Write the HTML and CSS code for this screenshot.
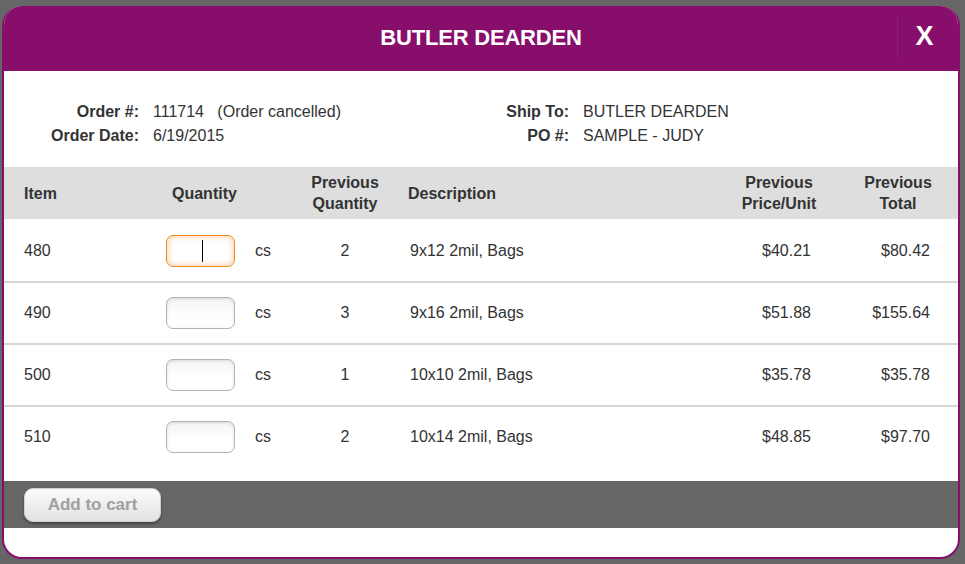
FILE: index.html
```html
<!DOCTYPE html>
<html lang="en">
<head>
    <meta charset="UTF-8">
    <meta name="viewport" content="width=device-width, initial-scale=1.0">
    <title>Reorder - BUTLER DEARDEN</title>
    <link rel="stylesheet" href="styles.css">
</head>
<body>
    <div class="modal">
        <div class="modal-header">
            <h1>BUTLER DEARDEN</h1>
            <button type="button" class="close-btn">X</button>
        </div>

        <div class="order-info">
            <div class="info-group">
                <span class="label">Order #:</span>
                <span class="value">111714&nbsp;&nbsp;&nbsp;(Order cancelled)</span>
                <span class="label">Order Date:</span>
                <span class="value">6/19/2015</span>
            </div>
            <div class="info-group">
                <span class="label">Ship To:</span>
                <span class="value">BUTLER DEARDEN</span>
                <span class="label">PO #:</span>
                <span class="value">SAMPLE - JUDY</span>
            </div>
        </div>

        <div class="table-wrap">
            <table class="order-table">
                <colgroup>
                    <col class="c-item">
                    <col class="c-qty">
                    <col class="c-prevqty">
                    <col class="c-desc">
                    <col class="c-price">
                    <col class="c-total">
                </colgroup>
                <thead>
                    <tr>
                        <th class="left">Item</th>
                        <th class="qty-head">Quantity</th>
                        <th>Previous<br>Quantity</th>
                        <th class="left desc">Description</th>
                        <th>Previous<br>Price/Unit</th>
                        <th>Previous<br>Total</th>
                    </tr>
                </thead>
                <tbody>
                    <tr>
                        <td>480</td>
                        <td><div class="qty-cell"><span class="qty-box"><input type="text" class="qty-input focused"><span class="caret"></span></span>cs</div></td>
                        <td class="center">2</td>
                        <td class="desc">9x12 2mil, Bags</td>
                        <td class="money price">$40.21</td>
                        <td class="money total">$80.42</td>
                    </tr>
                    <tr>
                        <td>490</td>
                        <td><div class="qty-cell"><span class="qty-box"><input type="text" class="qty-input"></span>cs</div></td>
                        <td class="center">3</td>
                        <td class="desc">9x16 2mil, Bags</td>
                        <td class="money price">$51.88</td>
                        <td class="money total">$155.64</td>
                    </tr>
                    <tr>
                        <td>500</td>
                        <td><div class="qty-cell"><span class="qty-box"><input type="text" class="qty-input"></span>cs</div></td>
                        <td class="center">1</td>
                        <td class="desc">10x10 2mil, Bags</td>
                        <td class="money price">$35.78</td>
                        <td class="money total">$35.78</td>
                    </tr>
                    <tr>
                        <td>510</td>
                        <td><div class="qty-cell"><span class="qty-box"><input type="text" class="qty-input"></span>cs</div></td>
                        <td class="center">2</td>
                        <td class="desc">10x14 2mil, Bags</td>
                        <td class="money price">$48.85</td>
                        <td class="money total">$97.70</td>
                    </tr>
                </tbody>
            </table>
        </div>

        <div class="modal-footer">
            <button type="button" class="cart-btn">Add to cart</button>
        </div>
    </div>
</body>
</html>
```

FILE: styles.css
```css
body {
    font-family: "Liberation Sans", Arial, sans-serif;
    margin: 0;
    padding: 6px 0 0 2px;
    background-color: #666;
    color: #333;
}

.modal {
    width: 958px;
    box-sizing: border-box;
    background-color: #fff;
    border: 2px solid #870e6b;
    border-top: none;
    border-radius: 20px;
    overflow: hidden;
}

.modal-header {
    height: 65px;
    margin: 0 -2px;
    background-color: #870e6b;
    display: flex;
    align-items: center;
    justify-content: center;
    position: relative;
}

.modal-header h1 {
    margin: 0 0 1px 0;
    color: #fff;
    font-size: 22px;
    font-weight: bold;
    letter-spacing: -0.2px;
}

.close-btn {
    position: absolute;
    right: 0;
    top: 10px;
    width: 63px;
    height: 42px;
    padding: 0 9px 2px 0;
    background: none;
    border: none;
    border-left: 1px solid rgba(255, 255, 255, 0.08);
    color: #fff;
    font-family: "Liberation Sans", Arial, sans-serif;
    font-size: 27px;
    font-weight: bold;
    cursor: pointer;
}

/* order details */
.order-info {
    display: flex;
    padding: 29px 0 19px 0;
}

.info-group {
    display: grid;
    grid-template-columns: 135px auto;
    column-gap: 14px;
    width: 430px;
    font-size: 16px;
    line-height: 24px;
}

.info-group .label {
    font-weight: bold;
    text-align: right;
}

/* items table */
.table-wrap {
    padding-bottom: 14px;
}

.order-table {
    width: 100%;
    table-layout: fixed;
    border-collapse: collapse;
    font-size: 16px;
}

.c-item { width: 136px; }
.c-qty { width: 150px; }
.c-prevqty { width: 110px; }
.c-desc { width: 320px; }
.c-price { width: 118px; }
.c-total { width: 120px; }

.order-table thead tr {
    background-color: #dedede;
}

.order-table th {
    height: 52px;
    padding: 0;
    font-weight: bold;
    line-height: 21px;
    text-align: center;
    vertical-align: middle;
}

.order-table th.left {
    text-align: left;
    padding-left: 20px;
}

.order-table th.qty-head {
    text-align: left;
    padding-left: 32px;
}

.order-table th.desc {
    padding-left: 8px;
}

.order-table td {
    height: 60px;
    padding: 0 0 0 20px;
    vertical-align: middle;
    border-top: 2px solid #d6d6d6;
}

.order-table tbody tr:first-child td {
    border-top-color: #fff;
}

.order-table td.center {
    text-align: center;
    padding: 0;
}

.order-table td.desc {
    padding-left: 10px;
}

.order-table td.money {
    text-align: right;
    padding-left: 0;
}

.order-table td.price { padding-right: 27px; }
.order-table td.total { padding-right: 28px; }

.qty-cell {
    display: flex;
    align-items: center;
    gap: 20px;
    padding-left: 6px;
    white-space: nowrap;
}

.qty-box {
    position: relative;
    display: inline-block;
}

.qty-input {
    display: block;
    width: 69px;
    height: 32px;
    box-sizing: border-box;
    border: 1px solid #b4b4b4;
    border-radius: 7px;
    background: linear-gradient(#f4f4f4, #fff 60%);
    box-shadow: inset 0 1px 3px rgba(0, 0, 0, 0.12);
    outline: none;
    text-align: center;
}

.qty-input.focused {
    border-color: #ee8a22;
    background: #fff;
    box-shadow: inset 0 0 6px rgba(240, 140, 50, 0.55);
}

.caret {
    position: absolute;
    left: 36px;
    top: 5px;
    width: 1px;
    height: 22px;
    background-color: #000;
}

/* footer */
.modal-footer {
    background-color: #666;
    padding: 7px 20px 6px 20px;
    margin-bottom: 29px;
}

.cart-btn {
    width: 137px;
    height: 34px;
    padding: 0;
    font-family: "Liberation Sans", Arial, sans-serif;
    font-size: 17px;
    font-weight: bold;
    color: #a0a0a0;
    background: linear-gradient(#fbfbfb, #e2e2e2);
    border: 1px solid #d0d0d0;
    border-radius: 9px;
    box-shadow: 0 2px 3px rgba(0, 0, 0, 0.35);
    cursor: pointer;
}
```
